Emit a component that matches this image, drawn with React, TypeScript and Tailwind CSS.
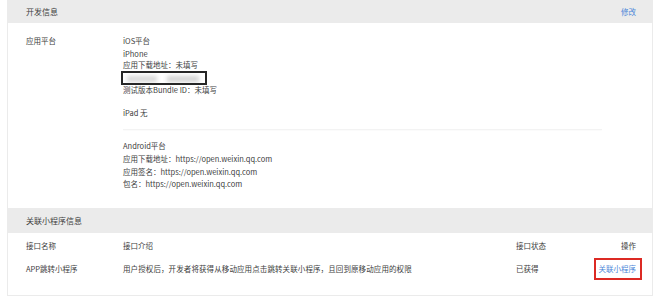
import React from "react";

const font = { fontFamily: '"Noto Sans CJK SC", "Noto Sans", sans-serif' };

export default function App() {
  return (
    <div className="w-[660px] h-[301px] bg-white overflow-hidden px-[7px] text-[#404040]" style={font}>
      <div className="border-x border-b border-[#ebebeb] h-[296px] flex flex-col">
        <div className="h-[23px] bg-[#ebebeb] flex items-center justify-between pl-[18px] pr-[16px] shrink-0">
          <span className="text-[8px] leading-none">开发信息</span>
          <span className="text-[7.5px] leading-none text-[#4a86d8]">修改</span>
        </div>
        <div className="flex pl-[18px] pt-[12px] text-[7.5px] leading-[12px] h-[185px] shrink-0">
          <div className="w-[97px] shrink-0">应用平台</div>
          <div className="flex-1 pr-[50px]">
            <div>iOS平台</div>
            <div className="mt-[1px]">iPhone</div>
            <div className="-mt-[1px]">应用下载地址：未填写</div>
            <div className="ml-[-2px] w-[86px] h-[14px] border-2 border-[#262626] bg-white relative overflow-hidden">
              <div className="absolute left-[4px] top-[3px] w-[30px] h-[6px] bg-[#d6d6d6] blur-[2px]" />
              <div className="absolute left-[44px] top-[3px] w-[32px] h-[6px] bg-[#d2d2d2] blur-[2px]" />
            </div>
            <div className="-mt-[1px]">测试版本Bundle ID：未填写</div>
            <div className="mt-[11px]">iPad 无</div>
            <div className="mt-[10px] h-px bg-[#f3f3f3] shadow-[0_1px_1px_rgba(0,0,0,0.02)]" />
            <div className="mt-[10px]">Android平台</div>
            <div className="leading-[12.7px] mt-[1px]">应用下载地址：https://open.weixin.qq.com</div>
            <div className="leading-[12.7px]">应用签名：https://open.weixin.qq.com</div>
            <div className="leading-[12.7px]">包名：https://open.weixin.qq.com</div>
          </div>
        </div>
        <div className="h-[25px] bg-[#ebebeb] flex items-center pl-[18px] shrink-0">
          <span className="text-[8px] leading-none">关联小程序信息</span>
        </div>
        <div className="text-[7.5px] leading-[12px] pl-[18px] pr-[16px]">
          <div className="flex items-center h-[24px] pt-[1px]">
            <div className="w-[97px] shrink-0">接口名称</div>
            <div className="flex-1">接口介绍</div>
            <div className="w-[77px] shrink-0">接口状态</div>
            <div className="w-[43px] shrink-0 text-right">操作</div>
          </div>
          <div className="flex items-center h-[24px]">
            <div className="w-[97px] shrink-0">APP跳转小程序</div>
            <div className="flex-1 tracking-[0.1px]">用户授权后，开发者将获得从移动应用点击跳转关联小程序，且回到原移动应用的权限</div>
            <div className="w-[77px] shrink-0">已获得</div>
            <div className="w-[43px] shrink-0 text-right">
              <span className="relative text-[#4a86d8]">
                关联小程序
                <span className="absolute left-[-5px] right-[-6px] top-[-5px] bottom-[-6px] border-2 border-[#dc2a24]" />
              </span>
            </div>
          </div>
        </div>
      </div>
    </div>
  );
}
